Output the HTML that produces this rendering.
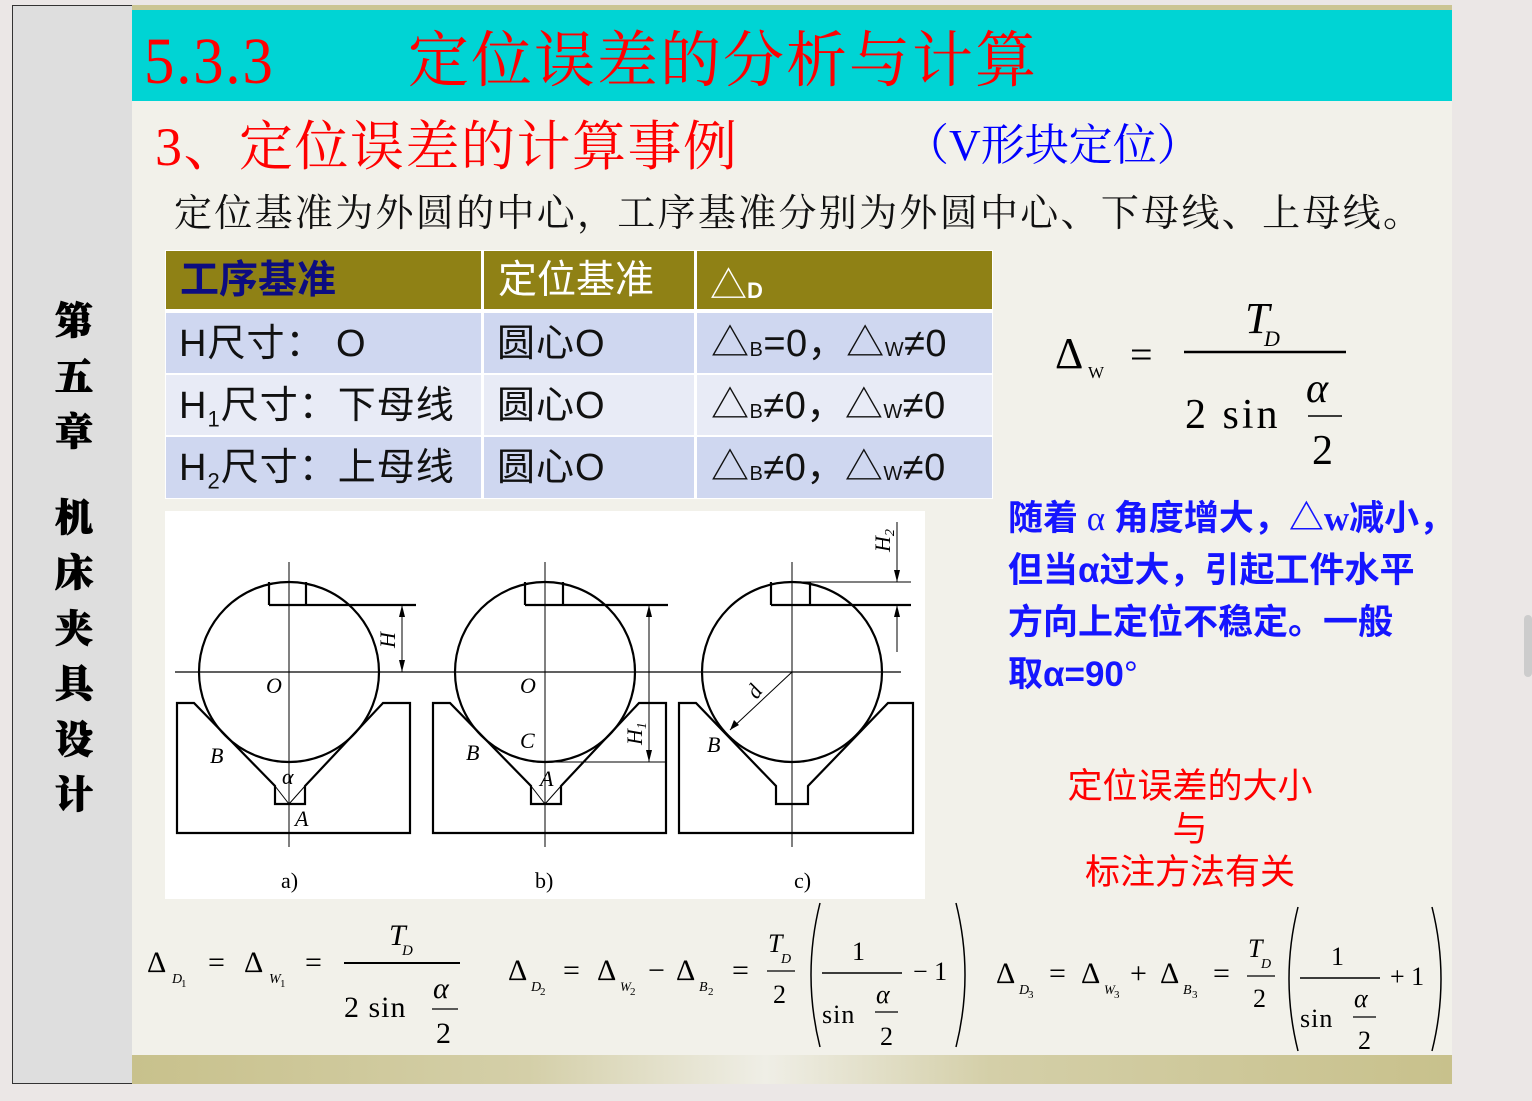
<!DOCTYPE html>
<html><head><meta charset="utf-8"><style>
*{margin:0;padding:0;box-sizing:border-box}
body{width:1532px;height:1101px;background:#ebe7e6;position:relative;overflow:hidden;font-family:"Liberation Sans","Noto Sans CJK SC",sans-serif}
.a{position:absolute;white-space:nowrap}
.serif{font-family:"Liberation Serif","Noto Serif CJK SC",serif}
</style></head><body>
<div class="a" style="left:12px;top:5px;width:121px;height:1079px;background:#dedede;border:1.5px solid #333"></div>
<div class="a" style="left:132px;top:5px;width:1320px;height:1079px;background:#f2f1ea"></div>
<div class="a" style="left:132px;top:5px;width:1320px;height:6px;background:#cbc593"></div>
<div class="a" style="left:132px;top:10px;width:1320px;height:91px;background:#00d4d4"></div>
<div class="a" style="left:132px;top:1055px;width:1320px;height:29px;background:linear-gradient(90deg,#c8c18c 0%,#d4cfa8 30%,#efeee6 48%,#d4cfa8 65%,#c8c18c 100%)"></div>

<div class="a serif" style="left:14px;top:295px;width:120px;text-align:center;font-size:38px;font-weight:900;line-height:55.5px;white-space:normal;-webkit-text-stroke:1px #000">第<br>五<br>章<br><div style="height:30px"></div>机<br>床<br>夹<br>具<br>设<br>计</div>

<div class="a serif" style="left:144px;top:22px;font-size:66px;color:#f00;line-height:80px;letter-spacing:2px;transform:scaleX(0.92);transform-origin:left">5.3.3</div>
<div class="a serif" style="left:408px;top:22px;font-size:61px;color:#f00;line-height:80px;letter-spacing:2px">定位误差的分析与计算</div>

<div class="a serif" style="left:155px;top:112px;font-size:54px;color:#f00;line-height:70px;letter-spacing:1.5px">3、定位误差的计算事例</div>
<div class="a serif" style="left:905px;top:118px;font-size:44px;color:#00f;line-height:55px">（V形块定位）</div>
<div class="a serif" style="left:174px;top:190px;font-size:38px;color:#111;line-height:48px;letter-spacing:2.3px">定位基准为外圆的中心，工序基准分别为外圆中心、下母线、上母线。</div>

<!-- table -->
<div class="a" style="left:165px;top:250px;width:828px;height:249px;background:#fff"></div>
<div class="a" style="left:166px;top:251px;width:315px;height:58px;background:#8f8115"></div>
<div class="a" style="left:484px;top:251px;width:210px;height:58px;background:#8f8115"></div>
<div class="a" style="left:697px;top:251px;width:295px;height:58px;background:#8f8115"></div>
<div class="a" style="left:166px;top:313px;width:315px;height:60px;background:#cfd7f0"></div>
<div class="a" style="left:484px;top:313px;width:210px;height:60px;background:#cfd7f0"></div>
<div class="a" style="left:697px;top:313px;width:295px;height:60px;background:#cfd7f0"></div>
<div class="a" style="left:166px;top:375px;width:315px;height:60px;background:#e8ebf6"></div>
<div class="a" style="left:484px;top:375px;width:210px;height:60px;background:#e8ebf6"></div>
<div class="a" style="left:697px;top:375px;width:295px;height:60px;background:#e8ebf6"></div>
<div class="a" style="left:166px;top:437px;width:315px;height:61px;background:#cfd7f0"></div>
<div class="a" style="left:484px;top:437px;width:210px;height:61px;background:#cfd7f0"></div>
<div class="a" style="left:697px;top:437px;width:295px;height:61px;background:#cfd7f0"></div>

<div class="a" style="left:180px;top:257px;font-size:39px;font-weight:bold;color:#0c0c80;line-height:48px">工序基准</div>
<div class="a" style="left:498px;top:257px;font-size:39px;color:#fff;line-height:48px">定位基准</div>
<div class="a" style="left:710px;top:262px;font-size:37px;color:#fff;line-height:48px">△<span style="font-size:22px;font-weight:bold">D</span></div>

<div class="a" style="left:179px;top:320px;font-size:38px;color:#111;line-height:48px;letter-spacing:1px">H尺寸：&nbsp;O</div>
<div class="a" style="left:179px;top:382px;font-size:38px;color:#111;line-height:48px;letter-spacing:1px">H<sub style="font-size:22px">1</sub>尺寸：下母线</div>
<div class="a" style="left:179px;top:444px;font-size:38px;color:#111;line-height:48px;letter-spacing:1px">H<sub style="font-size:22px">2</sub>尺寸：上母线</div>
<div class="a" style="left:497px;top:320px;font-size:38px;color:#111;line-height:48px;letter-spacing:1px">圆心O</div>
<div class="a" style="left:497px;top:382px;font-size:38px;color:#111;line-height:48px;letter-spacing:1px">圆心O</div>
<div class="a" style="left:497px;top:444px;font-size:38px;color:#111;line-height:48px;letter-spacing:1px">圆心O</div>
<div class="a" style="left:711px;top:320px;font-size:38px;color:#111;line-height:48px;letter-spacing:0.5px">△<span style="font-size:20px">B</span>=0，△<span style="font-size:20px">W</span>≠0</div>
<div class="a" style="left:711px;top:382px;font-size:38px;color:#111;line-height:48px;letter-spacing:0.5px">△<span style="font-size:20px">B</span>≠0，△<span style="font-size:20px">W</span>≠0</div>
<div class="a" style="left:711px;top:444px;font-size:38px;color:#111;line-height:48px;letter-spacing:0.5px">△<span style="font-size:20px">B</span>≠0，△<span style="font-size:20px">W</span>≠0</div>

<!-- main formula -->
<svg class="a" style="left:1040px;top:280px" width="330" height="200" font-family="Liberation Serif,serif">
<text x="15" y="88" font-size="44">Δ</text><text x="48" y="98" font-size="17">W</text>
<text x="90" y="88" font-size="40">=</text>
<line x1="144" y1="72" x2="306" y2="72" stroke="#000" stroke-width="2.5"/>
<text x="205" y="53" font-size="44" font-style="italic">T</text><text x="224" y="66" font-size="22" font-style="italic">D</text>
<text x="145" y="148" font-size="42" letter-spacing="3">2 sin</text>
<text x="266" y="122" font-size="42" font-style="italic">α</text>
<line x1="268" y1="136" x2="302" y2="136" stroke="#000" stroke-width="1.5"/>
<text x="272" y="184" font-size="42">2</text>
</svg>

<div class="a" style="left:1008px;top:493px;font-size:35px;font-weight:bold;color:#1515ff;line-height:52px">随着<span class="serif" style="font-weight:normal"> α </span>角度增大，△<span class="serif">w</span>减小，<br>但当α过大，引起工件水平<br>方向上定位不稳定。一般<br>取α=90<span style="font-weight:normal">°</span></div>
<div class="a" style="left:1030px;top:765px;width:320px;text-align:center;font-size:35px;color:#f00;line-height:43px">定位误差的大小<br>与<br>标注方法有关</div>

<!-- diagram -->
<svg class="a" style="left:0;top:0" width="1532" height="1101" font-family="Liberation Serif,serif">
<rect x="165" y="511" width="760" height="388" fill="#fff"/>
<g stroke="#000" fill="none">
<line x1="175" y1="672" x2="901" y2="672" stroke-width="1.2"/>
<g stroke-width="1"><line x1="289" y1="562" x2="289" y2="847"/><line x1="545" y1="562" x2="545" y2="847"/><line x1="792" y1="562" x2="792" y2="847"/></g>
<g stroke-width="2.2">
<circle cx="289" cy="672" r="90"/><circle cx="545" cy="672" r="90"/><circle cx="792" cy="672" r="90"/>
<path d="M177 703 L194 703 L275 786 L275 804 L305 804 L305 786 L383 703 L410 703 L410 833 L177 833 Z"/>
<path d="M433 703 L450 703 L531 786 L531 804 L561 804 L561 786 L639 703 L666 703 L666 833 L433 833 Z"/>
<path d="M679 703 L696 703 L776 786 L776 804 L808 804 L808 786 L888 703 L913 703 L913 833 L679 833 Z"/>
<path d="M269 605 L269 582 M269 605 L416 605 M306 582 L306 605"/>
<path d="M525 605 L525 582 M525 605 L668 605 M563 582 L563 605"/>
<path d="M771 605 L771 582 M771 605 L911 605 M810 582 L810 605"/>
</g>
<g stroke-width="1">
<line x1="275" y1="786" x2="289" y2="804"/><line x1="305" y1="786" x2="289" y2="804"/>
<line x1="531" y1="786" x2="545" y2="804"/><line x1="561" y1="786" x2="545" y2="804"/>
<line x1="402" y1="605" x2="402" y2="672"/>
<line x1="649" y1="605" x2="649" y2="762"/><line x1="545" y1="762" x2="666" y2="762"/>
<line x1="792" y1="582" x2="911" y2="582"/>
<line x1="897" y1="522" x2="897" y2="582"/><line x1="897" y1="605" x2="897" y2="652"/>
<line x1="792" y1="672" x2="730" y2="730"/>
</g>
</g>
<g fill="#000">
<path d="M402 605 l-3 12 h6z M402 672 l-3 -12 h6z M649 605 l-3 12 h6z M649 762 l-3 -12 h6z M897 582 l-3 -12 h6z M897 605 l-3 12 h6z M730 730 l4 -10 l5 5z"/>
</g>
<g font-style="italic" font-size="22">
<text x="266" y="693">O</text><text x="520" y="693">O</text>
<text x="210" y="763">B</text><text x="466" y="760">B</text><text x="707" y="752">B</text>
<text x="520" y="748">C</text><text x="282" y="784">α</text><text x="295" y="826">A</text><text x="540" y="786">A</text>
<text transform="translate(395,648) rotate(-90)">H</text>
<text transform="translate(642,745) rotate(-90)">H<tspan font-size="14" dy="4">1</tspan></text>
<text transform="translate(890,552) rotate(-90)">H<tspan font-size="14" dy="4">2</tspan></text>
<text transform="translate(757,700) rotate(-55)">d</text>
</g>
<g font-size="22"><text x="281" y="888">a)</text><text x="535" y="888">b)</text><text x="794" y="888">c)</text></g>
</svg>

<!-- bottom formulas -->
<svg class="a" style="left:130px;top:895px" width="1330" height="160" font-family="Liberation Serif,serif" font-size="30">
<text x="17" y="77">Δ</text><text x="42" y="88" font-size="14" font-style="italic">D</text><text x="51" y="92" font-size="11">1</text>
<text x="78" y="77">=</text>
<text x="114" y="77">Δ</text><text x="139" y="88" font-size="14" font-style="italic">W</text><text x="150" y="92" font-size="11">1</text>
<text x="175" y="77">=</text>
<line x1="214" y1="68" x2="330" y2="68" stroke="#000" stroke-width="2"/>
<text x="259" y="50" font-style="italic">T</text><text x="272" y="60" font-size="15" font-style="italic">D</text>
<text x="214" y="122" letter-spacing="1">2 sin</text>
<text x="303" y="103" font-style="italic">α</text><line x1="302" y1="114" x2="328" y2="114" stroke="#000" stroke-width="1.3"/><text x="306" y="148">2</text>

<text x="378" y="85">Δ</text><text x="401" y="96" font-size="14" font-style="italic">D</text><text x="410" y="100" font-size="11">2</text>
<text x="433" y="85">=</text>
<text x="467" y="85">Δ</text><text x="490" y="96" font-size="13" font-style="italic">W</text><text x="500" y="100" font-size="11">2</text>
<text x="518" y="85">−</text>
<text x="546" y="85">Δ</text><text x="569" y="96" font-size="14" font-style="italic">B</text><text x="578" y="100" font-size="11">2</text>
<text x="602" y="85">=</text>
<text x="638" y="57" font-style="italic" font-size="26">T</text><text x="651" y="68" font-size="14" font-style="italic">D</text>
<line x1="637" y1="76" x2="665" y2="76" stroke="#000" stroke-width="1.3"/><text x="643" y="108" font-size="26">2</text>
<path d="M690 8 Q672 80 690 152" stroke="#000" fill="none" stroke-width="1.5"/>
<text x="722" y="65" font-size="26">1</text>
<line x1="692" y1="78" x2="772" y2="78" stroke="#000" stroke-width="1.5"/>
<text x="692" y="128" font-size="26" letter-spacing="1">sin</text>
<text x="746" y="108" font-style="italic" font-size="26">α</text><line x1="745" y1="117" x2="768" y2="117" stroke="#000" stroke-width="1.2"/><text x="750" y="150" font-size="26">2</text>
<text x="783" y="85" font-size="26">− 1</text>
<path d="M826 8 Q844 80 826 152" stroke="#000" fill="none" stroke-width="1.5"/>

<text x="866" y="88">Δ</text><text x="889" y="99" font-size="14" font-style="italic">D</text><text x="898" y="103" font-size="11">3</text>
<text x="919" y="88">=</text>
<text x="951" y="88">Δ</text><text x="974" y="99" font-size="13" font-style="italic">W</text><text x="984" y="103" font-size="11">3</text>
<text x="1000" y="88">+</text>
<text x="1030" y="88">Δ</text><text x="1053" y="99" font-size="14" font-style="italic">B</text><text x="1062" y="103" font-size="11">3</text>
<text x="1083" y="88">=</text>
<text x="1118" y="62" font-style="italic" font-size="26">T</text><text x="1131" y="73" font-size="14" font-style="italic">D</text>
<line x1="1117" y1="81" x2="1145" y2="81" stroke="#000" stroke-width="1.3"/><text x="1123" y="112" font-size="26">2</text>
<path d="M1168 12 Q1150 84 1168 156" stroke="#000" fill="none" stroke-width="1.5"/>
<text x="1201" y="70" font-size="26">1</text>
<line x1="1170" y1="83" x2="1250" y2="83" stroke="#000" stroke-width="1.5"/>
<text x="1170" y="132" font-size="26" letter-spacing="1">sin</text>
<text x="1224" y="112" font-style="italic" font-size="26">α</text><line x1="1223" y1="122" x2="1246" y2="122" stroke="#000" stroke-width="1.2"/><text x="1228" y="154" font-size="26">2</text>
<text x="1260" y="90" font-size="26">+ 1</text>
<path d="M1302 12 Q1320 84 1302 156" stroke="#000" fill="none" stroke-width="1.5"/>
</svg>
<div class="a" style="left:1524px;top:615px;width:8px;height:62px;background:#ccc;border-radius:4px"></div>
</body></html>
